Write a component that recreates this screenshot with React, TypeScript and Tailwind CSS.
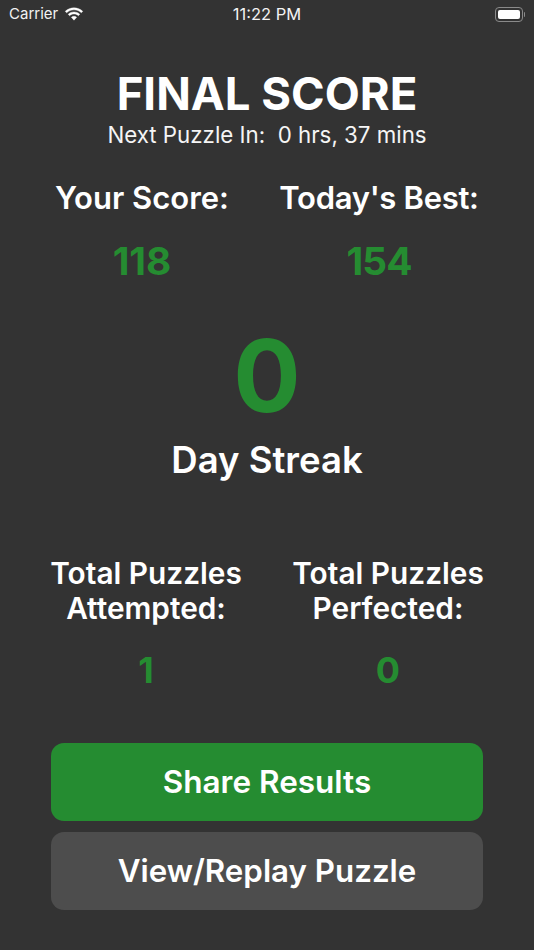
const GREEN = "text-[#258c31]";

const TOTALS = [
  { first: "Total Puzzles", second: "Attempted:", value: "1" },
  { first: "Total Puzzles", second: "Perfected:", value: "0" },
];

export default function App() {
  return (
    <div className="font-['Inter',sans-serif] w-[534px] h-[950px] overflow-hidden bg-[#333333] text-white flex flex-col">
      {/* Status bar */}
      <div className="h-[28px] pl-[9px] pr-[9px] flex items-center justify-between relative text-[15px] text-[#f2f2f2]">
        <div className="flex items-center gap-[6px]">
          <span>Carrier</span>
          <svg width="20" height="15" viewBox="0 0 19 14" fill="white" stroke="white" strokeWidth="0.4">
            <path d="M9.5 2.6c2.7 0 5.100 1 7 2.800l1.300-1.400C15.600 1.900 12.700.7 9.500.7S3.400 1.900 1.200 4l1.300 1.400c1.900-1.800 4.300-2.800 7-2.800z" />
            <path d="M9.500 6.500c1.600 0 3 .6 4.200 1.700l1.300-1.400c-1.500-1.400-3.400-2.200-5.500-2.200S5.500 5.400 4 6.800l1.300 1.400C6.500 7.100 7.900 6.500 9.500 6.500z" />
            <path d="M9.500 8.700c-1 0-1.800.4-2.500 1l2.500 2.700 2.500-2.700c-.7-.6-1.500-1-2.500-1z" />
          </svg>
        </div>
        <span className="absolute left-0 right-0 text-center text-[16.500px]">11:22 PM</span>
        <div className="flex items-center gap-[1px]">
          <div className="w-[28px] h-[15px] rounded-[4px] border border-[#8a8a8a] p-[2px]">
            <div className="w-full h-full rounded-[2px] bg-white" />
          </div>
          <div className="w-[1.500px] h-[5px] rounded-r-sm bg-[#8a8a8a]" />
        </div>
      </div>

      {/* Header */}
      <div className="mt-[37px] text-center text-[45.500px] leading-[58px] font-bold">FINAL SCORE</div>
      <div className="mt-[-1px] text-center text-[22.300px] leading-[26px] text-[#f5f5f5] whitespace-pre">Next Puzzle In:  0 hrs, 37 mins</div>

      {/* Scores */}
      <div className="mt-[32px] flex justify-center gap-[52px] text-[31px] leading-[35px] font-semibold">
        <div className="w-[172px] flex flex-col items-center">
          <span className="whitespace-nowrap">Your Score:</span>
          <span className={`mt-[26px] text-[38.800px] leading-[40px] font-bold ${GREEN}`}>118</span>
        </div>
        <div className="w-[198px] flex flex-col items-center">
          <span className="whitespace-nowrap tracking-[-0.3px]">Today's Best:</span>
          <span className={`mt-[26px] text-[38.800px] leading-[40px] font-bold tracking-[-1px] ${GREEN}`}>154</span>
        </div>
      </div>

      {/* Streak */}
      <div className={`mt-[40px] text-center text-[100px] leading-[110px] font-bold ${GREEN}`}>0</div>
      <div className="mt-[8px] text-center text-[36.500px] leading-[42px] font-semibold">Day Streak</div>

      {/* Totals */}
      <div className="mt-[75px] flex justify-center gap-[52px]">
        {TOTALS.map((s) => (
          <div key={s.second} className="w-[190px] flex flex-col items-center">
            <div className="text-center text-[29.800px] leading-[35px] font-semibold whitespace-nowrap">
              <div>{s.first}</div>
              <div>{s.second}</div>
            </div>
            <span className={`mt-[24px] text-[36px] leading-[40px] font-bold ${GREEN}`}>{s.value}</span>
          </div>
        ))}
      </div>

      {/* Buttons */}
      <div className="mt-[53px] px-[51px] flex flex-col gap-[11px]">
        <button className="h-[78px] rounded-[13px] bg-[#258c31] text-[31.500px] font-semibold">Share Results</button>
        <button className="h-[78px] rounded-[13px] bg-[#4d4d4d] text-[31.300px] font-semibold">View/Replay Puzzle</button>
      </div>
    </div>
  );
}
